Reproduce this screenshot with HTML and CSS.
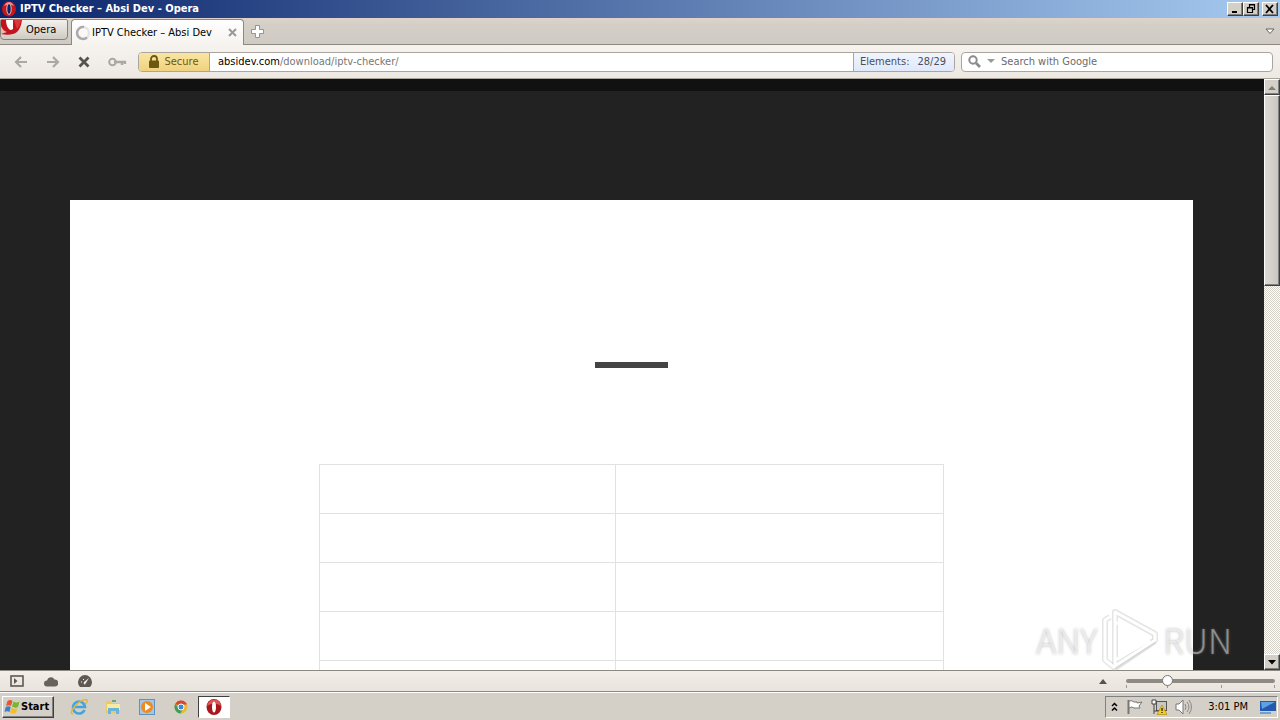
FILE: index.html
```html
<!DOCTYPE html>
<html lang="en">
<head>
<meta charset="utf-8">
<title>IPTV Checker – Absi Dev - Opera</title>
<link rel="stylesheet" href="styles.css">
</head>
<body>
<header class="titlebar">
  <svg class="logo" width="14" height="16" viewBox="0 0 14 16"><ellipse cx="7" cy="8" rx="7" ry="7.5" fill="#c4161c"/><path d="M2 5Q4 1 7 1t5 4Q7 2 2 5" fill="#ef8a80"/><ellipse cx="7" cy="8" rx="2.2" ry="5.5" fill="#0b2467" stroke="#f5c9c4" stroke-width=".9"/></svg>
  <h1 class="title">IPTV Checker – Absi Dev - Opera</h1>
  <button class="winbtn" aria-label="Minimize"><svg width="12" height="10"><path d="M3 8h5" stroke="#000" stroke-width="2"/></svg></button>
  <button class="winbtn" aria-label="Restore"><svg width="12" height="10"><path d="M4.500 3V.5h5v5H8M4 1h6M2.500 3.500h5v5h-5zM2 4h6" fill="none" stroke="#000" stroke-width="1.200"/></svg></button>
  <button class="winbtn winclose" aria-label="Close"><svg width="12" height="10"><path d="M2 1l7 8M9 1L2 9" stroke="#000" stroke-width="1.800"/></svg></button>
</header>

<nav class="tabbar">
  <button class="menu"><svg width="21" height="16" viewBox="0 0 21 16"><path d="M0 0h21Q20 8 16 12 11 16 0 14z" fill="#c4141b"/><path d="M0 6q2 5 6 6l-6 2z" fill="#eeb5b1"/><path d="M5 0h7v9q-1 1-3 1-4-3-4-10" fill="#fff"/><path d="M13 0h7q-1 6-4 9z" fill="#d8383a"/></svg>Opera</button>
  <div class="tab">
    <svg width="16" height="16" viewBox="0 0 16 16" fill="none" stroke-width="2.400"><circle cx="8" cy="8" r="6" stroke="#e6e5e3"/><path d="M12 12.500A6 6 0 1 1 9 2" stroke="#aaa"/></svg>
    <span class="tabname">IPTV Checker – Absi Dev</span>
    <button class="plain" aria-label="Close tab"><svg width="9" height="9" viewBox="0 0 9 9"><path d="M1 1l7 7M8 1L1 8" stroke="#999" stroke-width="2"/></svg></button>
  </div>
  <button class="plain add" aria-label="New tab"><svg width="13" height="13" viewBox="0 0 13 13"><path d="M4.500.5h4v4h4v4h-4v4h-4v-4h-4v-4h4z" fill="#fff" stroke="#96938c"/></svg></button>
  <button class="plain closed" aria-label="Closed tabs"><svg width="10" height="7" viewBox="0 0 10 7"><path d="M1 1h8L5 5.500z" fill="#fff" stroke="#65635d"/></svg></button>
</nav>

<div class="toolbar">
  <div class="navbtns">
    <button class="plain" aria-label="Back"><svg width="14" height="12" viewBox="0 0 14 12"><path d="M7 1L2 6l5 5M2 6h11" fill="none" stroke="#aaa8a4" stroke-width="2.200"/></svg></button>
    <button class="plain" aria-label="Forward"><svg width="14" height="12" viewBox="0 0 14 12"><path d="M7 1l5 5-5 5M12 6H1" fill="none" stroke="#aaa8a4" stroke-width="2.200"/></svg></button>
    <button class="plain" aria-label="Stop"><svg width="12" height="12" viewBox="0 0 12 12"><path d="M1.500 1.500l9 9M10.500 1.500l-9 9" stroke="#55534f" stroke-width="2.800"/></svg></button>
    <button class="plain" aria-label="Password manager"><svg width="19" height="10" viewBox="0 0 19 10"><circle cx="4.500" cy="5" r="3.300" fill="none" stroke="#aaa8a4" stroke-width="2"/><path d="M6 5h12M14 5v3M17 5v2" stroke="#aaa8a4" stroke-width="2.400"/></svg></button>
  </div>
  <div class="address">
    <button class="secure"><svg width="10" height="13" viewBox="0 0 10 13"><path d="M2 6V4a3 3 0 0 1 6 0v2" fill="none" stroke="#6d5811" stroke-width="1.800"/><rect y="5.500" width="10" height="7.500" rx="1" fill="#6d5811"/></svg>Secure</button>
    <a class="url" href="#"><b>absidev.com</b>/download/iptv-checker/</a>
    <span class="elements"><span>Elements:</span><span>28/29</span></span>
  </div>
  <label class="search"><svg width="27" height="14" viewBox="0 0 27 14"><circle cx="5" cy="5" r="3.700" fill="none" stroke="#8b8b8b" stroke-width="2"/><path d="M8 8l4 4" stroke="#8b8b8b" stroke-width="2.600"/><path d="M19 4h8l-4 4z" fill="#999"/></svg><input type="text" placeholder="Search with Google" aria-label="Search with Google"></label>
</div>

<div class="view">
  <main class="page">
    <div class="topstrip"></div>
    <article class="sheet">
      <div class="rule"></div>
      <table class="details">
        <tbody>
          <tr><td></td><td></td></tr>
          <tr><td></td><td></td></tr>
          <tr><td></td><td></td></tr>
          <tr><td></td><td></td></tr>
          <tr><td></td><td></td></tr>
        </tbody>
      </table>
    </article>
  </main>
  <div class="scroll">
    <button class="scrollbtn" aria-label="Scroll up"><svg width="8" height="5"><path d="M0 5l4-4 4 4z" fill="#807d77"/></svg></button>
    <div class="thumb"></div>
    <button class="scrollbtn last" aria-label="Scroll down"><svg width="8" height="5"><path d="M0 0h8L4 4.500z"/></svg></button>
  </div>
  <div class="watermark">
    <span>ANY</span>
    <svg width="58" height="64" viewBox="0 0 58 64" fill="none" stroke-linejoin="round"><g stroke="#b4b4b4" stroke-opacity=".4" stroke-width="6"><path d="M14 4l40 22v6L14 58z"/><path d="M9 9l-5 3v40l10 8 40-27"/></g><g stroke="#fff" stroke-width="3"><path d="M14 4l40 22v6L14 58z"/><path d="M14 14l34 19-34 19M9 9l-5 3v40l10 8"/></g></svg>
    <span>RUN</span>
  </div>
</div>

<footer class="status">
  <button class="plain" aria-label="Panels"><svg width="14" height="12" viewBox="0 0 14 12"><rect x="1" y="1" width="12" height="10" fill="none" stroke="#5d5a54" stroke-width="1.600"/><path d="M4 3l3.500 3L4 9z" fill="#5d5a54"/></svg></button>
  <button class="plain" aria-label="Opera Link"><svg width="14" height="11" viewBox="0 0 14 11"><path d="M3 10.500a3 3 0 0 1 0-6 4 4 0 0 1 7.500-1 3.500 3.500 0 0 1 .5 7z" fill="#66635d"/></svg></button>
  <button class="plain" aria-label="Opera Turbo"><svg width="14" height="12" viewBox="0 0 14 12"><path d="M2 12a7 7 0 1 1 10 0z" fill="#5d5a54"/><path d="M11 3L6 7q-1 2 1 2.500z" fill="#f1ede8"/><path d="M3 7h1M5 4l1 1" stroke="#f1ede8"/></svg></button>
  <button class="plain zoomup" aria-label="View options"><svg width="8" height="5"><path d="M0 5l4-5 4 5z" fill="#55534f"/></svg></button>
  <input class="zoom" type="range" min="0" max="100" value="26" aria-label="Zoom">
</footer>

<div class="taskbar">
  <button class="start"><svg width="17" height="16" viewBox="0 0 16 16"><path d="M3 2q3-2 5 0L6.500 7Q4 5.500 1.500 7z" fill="#e8562a"/><path d="M9 2.500q3 2 6 0L13.500 8q-3 1.500-6-.5z" fill="#75b82d"/><path d="M1.200 8q3-1.500 5 0L5 13q-2.500-1.500-5 0z" fill="#3c7ed0"/><path d="M7 8.800q3 2 6 .4L11.500 14q-3 1.500-6-.5z" fill="#f5be24"/></svg>Start</button>
  <div class="apps">
    <button class="app" aria-label="Internet Explorer"><svg width="18" height="18" viewBox="0 0 18 18"><path d="M14.500 12A6 6 0 1 1 15 9H5" fill="none" stroke="#43a5dc" stroke-width="2.600"/><path d="M3 16Q-1 15 5 8 13 0 17 2q1 2-2 4" fill="none" stroke="#e4b53d" stroke-width="1.500"/></svg></button>
    <button class="app" aria-label="Explorer"><svg width="16" height="16" viewBox="0 0 16 16"><path d="M1 2h5l1 2h8v10H1z" fill="#ebca63"/><path d="M2 5h13v6H2z" fill="#f9e9a5"/><path d="M3 15V9h11v6h-3v-3H6v3z" fill="#67b5dc"/><path d="M7 1h4v2H7z" fill="#62ad67"/></svg></button>
    <button class="app" aria-label="Media Player"><svg width="16" height="16" viewBox="0 0 16 16"><rect x=".5" y=".5" width="15" height="15" fill="#a3c7e7" stroke="#5f91c1"/><circle cx="8" cy="8" r="6" fill="#f08a1e"/><path d="M6 4l6 4-6 4z" fill="#fff"/></svg></button>
    <button class="app" aria-label="Chrome"><svg width="14" height="14" viewBox="0 0 14 14"><circle cx="7" cy="7" r="6.500" fill="#e6bd31"/><path d="M7 7L1.300 3.800A6.500 6.500 0 0 1 13 4.500H7z" fill="#d94539"/><path d="M1.300 3.800A6.500 6.500 0 0 0 6.500 13.500L9 8.500H5z" fill="#3f9d57"/><circle cx="7" cy="7" r="3" fill="#4186dc" stroke="#fff"/></svg></button>
    <button class="app active" aria-label="Opera"><svg width="16" height="16" viewBox="0 0 16 16"><ellipse cx="8" cy="8" rx="7.500" ry="8" fill="#a8171b"/><path d="M1 7Q2 1 8 .5T15 7Q8 2 1 7" fill="#db5552"/><ellipse cx="8" cy="8" rx="2" ry="5.500" fill="#fff"/></svg></button>
  </div>
  <div class="tray">
    <svg width="7" height="10" viewBox="0 0 7 10"><path d="M1 4l2.500-2.500L6 4M1 8.500L3.500 6 6 8.500" fill="none" stroke="#000" stroke-width="1.500"/></svg>
    <svg width="17" height="16" viewBox="0 0 17 16"><path d="M2.500 1v14" stroke="#777" stroke-width="2"/><path d="M3 2q3-1 5 1h3v1l5-1-3 4 1 2H8Q6 7 3 9z" fill="#fff" stroke="#777"/></svg>
    <svg width="16" height="16" viewBox="0 0 16 16"><rect x="5.500" y="2.500" width="10" height="9" fill="#c9c7c2" stroke="#555"/><path d="M1 1h4v4H1zM3 5v10M3 12h7" fill="#fff" stroke="#444"/><path d="M11 6l5 9.500H6z" fill="#f6cf22" stroke="#b48e00" stroke-width=".7"/><path d="M11 9v3M11 13v1" stroke="#222" stroke-width="1.300"/></svg>
    <svg width="17" height="16" viewBox="0 0 17 16"><path d="M1 5h3l4-4v14l-4-4H1z" fill="#fff" stroke="#777"/><path d="M10 5q2 3 0 6M12 3q4 5 0 10M14 1q5 7 0 14" fill="none" stroke="#888"/></svg>
    <time class="clock">3:01 PM</time>
    <svg width="16" height="14" viewBox="0 0 16 14"><path d="M0 1h16v10H0z" fill="#2459b0"/><path d="M1 2h14L2 9z" fill="#5da2e6"/><path d="M0 12h11v2H0z" fill="#70a0cf"/></svg>
  </div>
</div>
</body>
</html>
```
FILE: styles.css
```css
* { box-sizing: border-box; }
body {
  margin: 0;
  height: 100vh;
  display: flex;
  flex-direction: column;
  overflow: hidden;
  font: 11px/14px "DejaVu Sans Condensed", "DejaVu Sans", sans-serif;
  color: #000;
  background: #d4d0c8;
}
svg { display: block; flex: none; }
button, input { font: inherit; color: inherit; margin: 0; padding: 0; }
.plain { border: 0; background: none; display: flex; align-items: center; }

.titlebar {
  height: 18px;
  flex: none;
  display: flex;
  align-items: center;
  padding: 0 2px;
  background: linear-gradient(90deg, #0a246a, #a6caf0);
}
.title { margin: 0 auto 0 4px; font-size: 11px; font-weight: bold; color: #fff; }
.winbtn, .scrollbtn, .start {
  background: #d4d0c8;
  border: 1px solid;
  border-color: #fff #404040 #404040 #fff;
  box-shadow: inset -1px -1px #808080;
}
.winbtn { width: 16px; height: 14px; display: flex; justify-content: center; align-items: center; }
.winclose { margin-left: 3px; }

.tabbar {
  height: 27px;
  flex: none;
  display: flex;
  align-items: center;
  background: linear-gradient(#dfd3ca, #d4d0c8 6px, #cfcbc4);
  box-shadow: inset 0 -1px #8c8981;
}
.menu {
  width: 68px;
  height: 21px;
  align-self: flex-start;
  margin-top: 1px;
  display: flex;
  gap: 4px;
  align-items: center;
  border: 1px solid #85827b;
  border-radius: 2px 2px 4px 4px;
  background: linear-gradient(#f3f1ee, #cfcac3);
}
.menu svg { align-self: flex-start; }
.tab {
  width: 173px;
  height: 26px;
  margin: 1px 7px 0 3px;
  padding: 0 6px 0 3px;
  display: flex;
  align-items: center;
  gap: 1px;
  border: 1px solid #8c8981;
  border-bottom: 0;
  border-radius: 4px 4px 0 0;
  background: linear-gradient(#fff, #f6f3ef);
}
.tabname { margin-right: auto; white-space: nowrap; }
.closed { margin: 0 5px 0 auto; }

.toolbar {
  height: 34px;
  flex: none;
  display: flex;
  align-items: center;
  gap: 6px;
  padding: 0 7px 0 14px;
  background: linear-gradient(#f6f3ef, #ede8e2);
  border-bottom: 1px solid #a9a59d;
}
.navbtns { width: 118px; display: flex; gap: 18px; align-items: center; }
.address, .search {
  height: 20px;
  display: flex;
  align-items: center;
  border: 1px solid #aaa69f;
  border-radius: 4px;
  background: #fff;
  overflow: hidden;
}
.address { flex: 1; }
.search { width: 312px; padding-left: 6px; gap: 6px; color: #6b6b6b; }
.search input { flex: 1; min-width: 0; border: 0; outline: 0; background: none; }
.search input::placeholder { color: #6b6b6b; opacity: 1; }
.secure {
  width: 71px;
  height: 100%;
  display: flex;
  align-items: center;
  justify-content: center;
  gap: 5px;
  border: 0;
  border-right: 1px solid #bba869;
  background: linear-gradient(#fae5a2, #efd27e);
  color: #6d5811;
}
.url { flex: 1; padding-left: 8px; color: #777; text-decoration: none; }
.url b { font-weight: normal; color: #000; }
.elements {
  height: 100%;
  display: flex;
  align-items: center;
  gap: 8px;
  padding: 0 8px 0 6px;
  border-left: 1px solid #aaa69f;
  background: linear-gradient(#f1f5fe, #dfe8fb);
  color: #4b4f59;
}

.view { position: relative; flex: 1; min-height: 0; display: flex; }
.page { flex: 1; background: #222; overflow: hidden; }
.topstrip { height: 12px; background: #111; }
.sheet { margin: 109px 71px 0 70px; padding-top: 162px; background: #fff; min-height: 100%; }
.rule { width: 73px; height: 6px; margin: 0 auto 96px; background: #444; }
.details { width: 625px; max-width: 100%; margin: 0 auto; border-collapse: collapse; table-layout: fixed; }
.details td { height: 49px; border: 1px solid #e1e1e1; }
.details td:first-child { width: 296px; }
.scroll {
  width: 16px;
  display: flex;
  flex-direction: column;
  background: repeating-conic-gradient(#d4d0c8 0 25%, #fff 0 50%) 0 0 / 2px 2px;
}
.scrollbtn { height: 16px; display: flex; align-items: center; justify-content: center; }
.last { margin-top: auto; }
.thumb {
  height: 191px;
  background: linear-gradient(90deg, #dedad5, #c9c5be);
  border: 1px solid;
  border-color: #fff #404040 #404040 #fff;
  box-shadow: inset -1px -1px #808080;
}
.watermark {
  position: absolute;
  right: 48px;
  bottom: -2px;
  display: flex;
  align-items: center;
  gap: 4px;
  font: 300 34px/60px "Noto Sans CJK SC", "DejaVu Sans Condensed", sans-serif;
  color: rgba(255, 255, 255, .5);
  text-shadow: 0 0 3px rgba(130, 130, 130, .7);
  opacity: .85;
  pointer-events: none;
}

.status {
  height: 22px;
  flex: none;
  display: flex;
  align-items: center;
  gap: 20px;
  padding: 0 5px 0 10px;
  background: linear-gradient(#f4eee9, #e8e3dd);
  border-top: 1px solid #8c8981;
  border-bottom: 1px solid #8c8981;
}
.zoomup { margin-left: auto; }
.zoom {
  width: 149px;
  height: 14px;
  margin-left: -1px;
  appearance: none;
  background:
    linear-gradient(#999, #999) 0 100% / 1px 3px no-repeat,
    linear-gradient(#999, #999) 28% 100% / 1px 3px no-repeat,
    linear-gradient(#999, #999) 64% 100% / 1px 3px no-repeat,
    linear-gradient(#999, #999) 100% 100% / 1px 3px no-repeat;
}
.zoom::-webkit-slider-runnable-track { height: 4px; border-radius: 2px; background: #8e8b85; }
.zoom::-webkit-slider-thumb {
  appearance: none;
  width: 11px;
  height: 11px;
  margin-top: -4px;
  border: 1px solid #77746e;
  border-radius: 50%;
  background: #fff;
}

.taskbar {
  height: 28px;
  flex: none;
  display: flex;
  align-items: center;
  padding: 1px 2px 0;
  border-top: 1px solid #fff;
  background: #d4d0c8;
}
.start { width: 52px; height: 22px; display: flex; align-items: center; padding-left: 1px; font-weight: bold; }
.apps { display: flex; margin-left: 8px; gap: 1px; }
.app { width: 33px; height: 22px; display: flex; align-items: center; justify-content: center; border: 1px solid transparent; background: none; }
.active { width: 32px; background: #fff; border-color: #404040 #fff #fff #404040; }
.tray {
  height: 22px;
  margin-left: auto;
  display: flex;
  align-items: center;
  gap: 8px;
  padding: 0 1px 0 5px;
  border: 1px solid;
  border-color: #808080 #fff #fff #808080;
}
.clock { margin: 0 4px 0 8px; }
```
